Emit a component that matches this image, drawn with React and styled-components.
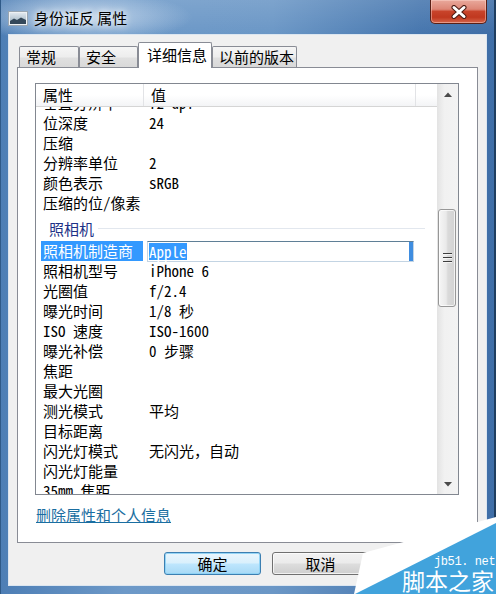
import React from "react";
import styled, { createGlobalStyle } from "styled-components";

const GlobalStyle = createGlobalStyle`
  html, body {
    margin: 0;
    padding: 0;
    background: #4f80b6;
  }
  body {
    width: 496px;
    height: 594px;
    overflow: hidden;
    font-family: "Noto Sans CJK SC", "Liberation Sans", sans-serif;
  }
  * {
    box-sizing: border-box;
  }
`;

const rows = [
  ["垂直分辨率", "72 dpi"],
  ["位深度", "24"],
  ["压缩", ""],
  ["分辨率单位", "2"],
  ["颜色表示", "sRGB"],
  ["压缩的位/像素", ""],
  { group: "照相机" },
  ["照相机制造商", "Apple", true],
  ["照相机型号", "iPhone 6"],
  ["光圈值", "f/2.4"],
  ["曝光时间", "1/8 秒"],
  ["ISO 速度", "ISO-1600"],
  ["曝光补偿", "0 步骤"],
  ["焦距", ""],
  ["最大光圈", ""],
  ["测光模式", "平均"],
  ["目标距离", ""],
  ["闪光灯模式", "无闪光，自动"],
  ["闪光灯能量", ""],
  ["35mm 焦距", ""],
  ["镜头制造商", ""],
  ["镜头型号", ""],
];

const tabs = [
  { label: "常规", w: 60 },
  { label: "安全", w: 59 },
  { label: "详细信息", w: 74, active: true },
  { label: "以前的版本", w: 85 },
];

const Window = styled.div`
  position: relative;
  width: 496px;
  height: 594px;
  display: flex;
  flex-direction: column;
  overflow: hidden;
  background:
    radial-gradient(ellipse 150px 34px at 80px 17px, rgba(214, 228, 243, 0.85), rgba(214, 228, 243, 0) 75%),
    linear-gradient(to bottom, rgba(255, 255, 255, 0.12), rgba(255, 255, 255, 0) 34px),
    linear-gradient(to right, #4d7eb5 0%, #6d99c8 25%, #6b97c6 55%, #4676ae 85%, #3f6ea7 100%);
  box-shadow: inset -2px 0 0 #1f3e60, inset 1px 0 0 #2f5a88;
`;

const TitleBar = styled.div`
  height: 34px;
  flex: none;
  display: flex;
  align-items: flex-start;
  padding-left: 8px;
`;

const TitleIcon = styled.svg`
  margin-top: 11px;
  flex: none;
`;

const TitleText = styled.div`
  margin: 8px 0 0 6px;
  font-size: 15px;
  line-height: 20px;
  color: #000;
  text-shadow: 0 0 6px rgba(255, 255, 255, 0.9), 0 0 10px rgba(255, 255, 255, 0.7);
`;

const CloseButton = styled.div`
  margin-left: auto;
  margin-right: 9px;
  width: 57px;
  height: 24px;
  display: flex;
  align-items: center;
  justify-content: center;
  border: 1px solid #5a2016;
  border-top: none;
  border-radius: 0 0 5px 5px;
  background: linear-gradient(to bottom, #e9a99c 0%, #dd8676 40%, #c8432a 50%, #c0381f 75%, #d7664b 100%);
  box-shadow: inset 0 0 0 1px rgba(255, 220, 210, 0.45);
`;

const Client = styled.div`
  flex: 1;
  margin: 0 9px 8px 8px;
  border: 1px solid #dce6f0;
  background: #f0f0f0;
  display: flex;
  flex-direction: column;
  padding: 7px 8px 10px 8px;
`;

const TabRow = styled.div`
  display: flex;
  align-items: flex-end;
  height: 26px;
  margin-bottom: -1px;
  padding-left: 2px;
  flex: none;
`;

const Tab = styled.div`
  width: ${(p) => p.$w}px;
  height: ${(p) => (p.$active ? 26 : 22)}px;
  padding-left: ${(p) => (p.$active ? 8 : 6)}px;
  border: 1px solid #898c95;
  border-bottom: none;
  border-radius: 2px 2px 0 0;
  font-size: 15px;
  line-height: ${(p) => (p.$active ? 24 : 20)}px;
  white-space: nowrap;
  color: #000;
  background: ${(p) =>
    p.$active
      ? "#fff"
      : "linear-gradient(to bottom, #f5f5f5 0%, #ededed 48%, #e0e0e0 52%, #d8d8d8 100%)"};
  position: ${(p) => (p.$active ? "relative" : "static")};
  z-index: ${(p) => (p.$active ? 1 : "auto")};
`;

const Panel = styled.div`
  height: 476px;
  flex: none;
  border: 1px solid #898c95;
  background: #fff;
  padding: 15px 0 0 17px;
`;

const List = styled.div`
  width: 424px;
  height: 412px;
  border: 1px solid #828790;
  display: flex;
  font-family: "Noto Sans Mono CJK SC", "Liberation Mono", "Noto Sans CJK SC", monospace;
  font-size: 15px;
  color: #000;
`;

const ListMain = styled.div`
  width: 401px;
  display: flex;
  flex-direction: column;
`;

const Header = styled.div`
  height: 23px;
  flex: none;
  display: flex;
  border-bottom: 1px solid #d5d5d5;
  background: linear-gradient(to bottom, #fff 0%, #fff 50%, #f3f4f6 100%);
`;

const HeaderCell = styled.div`
  width: ${(p) => p.$w}px;
  padding-left: 7px;
  line-height: 22px;
  border-right: 1px solid ${(p) => (p.$last ? "transparent" : "#e2e3e6")};
`;

const Body = styled.div`
  flex: 1;
  overflow: hidden;
`;

const Rows = styled.div`
  margin-top: -14px;
`;

const Row = styled.div`
  display: flex;
  height: 20px;
  line-height: 20px;
  padding-left: 5px;
  white-space: nowrap;
`;

const Label = styled.div`
  width: 102px;
  flex: none;
  padding-left: 2px;
  background: ${(p) => (p.$selected ? "#3399ff" : "transparent")};
  color: ${(p) => (p.$selected ? "#fff" : "#000")};
`;

const Value = styled.div`
  margin-left: 4px;
  padding-left: 2px;
`;

const EditBox = styled.div`
  margin-left: 4px;
  width: 267px;
  height: 21px;
  display: flex;
  align-items: center;
  border: 1px solid #c3d4e3;
  border-top-color: #5f7f96;
  padding-left: 1px;
  background: #fff;

  &::after {
    content: "";
    margin-left: auto;
    width: 4px;
    height: 19px;
    background: #3f8de0;
  }
`;

const Selection = styled.span`
  background: #3399ff;
  color: #fff;
  line-height: 17px;
`;

const Group = styled.div`
  display: flex;
  align-items: center;
  height: 28px;
  padding: 3px 12px 0 13px;
  color: #1e3287;
`;

const GroupLine = styled.div`
  flex: 1;
  height: 1px;
  margin-left: 4px;
  background: #e2e7ee;
`;

const ScrollBar = styled.div`
  width: 21px;
  display: flex;
  flex-direction: column;
  background: linear-gradient(to right, #e3e3e3 0%, #f1f1f1 35%, #f3f3f3 100%);
`;

const ArrowButton = styled.div`
  height: 20px;
  flex: none;
  display: flex;
  align-items: center;
  justify-content: center;
`;

const Track = styled.div`
  flex: 1;
`;

const Thumb = styled.div`
  margin: ${(p) => p.$offset}px 2px 0 1px;
  height: 98px;
  border: 1px solid #979797;
  border-radius: 3px;
  background: linear-gradient(to right, #f6f6f6 0%, #e9e9e9 45%, #dadada 55%, #d2d2d2 100%);
  box-shadow: inset 0 0 0 1px rgba(255, 255, 255, 0.7);
  display: flex;
  align-items: center;
  justify-content: center;
`;

const Grip = styled.div`
  width: 9px;
  height: 10px;
  background: repeating-linear-gradient(to bottom, #3d3d3d 0 1px, #f4f4f4 1px 2px, transparent 2px 4px);
`;

const DeleteLink = styled.a`
  display: block;
  width: max-content;
  margin: 10px 0 0 1px;
  font-size: 15px;
  line-height: 20px;
  color: #1a6ea1;
  text-decoration: underline;
  cursor: pointer;
`;

const ButtonRow = styled.div`
  display: flex;
  justify-content: flex-end;
  gap: 11px;
  margin-top: 9px;
  padding-right: 1px;
`;

const Button = styled.div`
  width: 97px;
  height: 23px;
  border-radius: 3px;
  font-size: 15px;
  line-height: 21px;
  text-align: center;
  border: 1px solid ${(p) => (p.$default ? "#3c7fb1" : "#707070")};
  color: ${(p) => (p.$disabled ? "#8d8d8d" : "#000")};
  background: ${(p) =>
    p.$default
      ? "linear-gradient(to bottom, #eaf6fd 0%, #d9f0fc 48%, #bee6fd 52%, #a7d9f5 100%)"
      : "linear-gradient(to bottom, #f2f2f2 0%, #ebebeb 48%, #dddddd 52%, #cfcfcf 100%)"};
  box-shadow: inset 0 0 0 1px ${(p) => (p.$default ? "rgba(140, 210, 245, 0.9)" : "rgba(255, 255, 255, 0.7)")};
`;

const Watermark = styled.div`
  position: absolute;
  right: 0;
  bottom: 0;
  width: 145px;
  height: 80px;
  color: #fff;
`;

const WatermarkShape = styled.svg`
  position: absolute;
  left: 0;
  top: 0;
`;

const SiteName = styled.span`
  position: absolute;
  left: 83px;
  top: 41px;
  white-space: nowrap;
  font-family: "Liberation Mono", monospace;
  font-size: 12px;
  line-height: 14px;
  letter-spacing: -0.4px;
`;

const SiteTitle = styled.span`
  position: absolute;
  left: 51px;
  top: 52px;
  white-space: nowrap;
  font-family: "Noto Sans CJK SC", sans-serif;
  font-size: 23px;
  line-height: 28px;
`;

function Arrow({ down }) {
  return (
    <svg width="8" height="5" viewBox="0 0 8 5">
      <path d={down ? "M0 0 H8 L4 4.5 Z" : "M0 5 H8 L4 0.5 Z"} fill="#4a4a4a" />
    </svg>
  );
}

export default function App() {
  return (
    <>
      <GlobalStyle />
      <Window>
        <TitleBar>
          <TitleIcon width="20" height="15" viewBox="0 0 20 15">
            <defs>
              <linearGradient id="sky" x1="0" y1="0" x2="0" y2="1">
                <stop offset="0" stopColor="#dfe7ee" />
                <stop offset="1" stopColor="#98aebd" />
              </linearGradient>
            </defs>
            <rect x="0.5" y="0.5" width="19" height="14" fill="#eef1f4" stroke="#9aa6b1" />
            <rect x="2" y="2" width="16" height="11" fill="url(#sky)" />
            <path d="M2 10 L6 7.5 L9 9 L13 6.5 L18 9 V13 H2 Z" fill="#34485a" />
          </TitleIcon>
          <TitleText>身份证反 属性</TitleText>
          <CloseButton>
            <svg width="18" height="14" viewBox="0 0 18 14">
              <path d="M4 2.5 L14 11.5 M14 2.5 L4 11.5" stroke="#4a1a12" strokeWidth="5" strokeLinecap="round" />
              <path d="M4 2.5 L14 11.5 M14 2.5 L4 11.5" stroke="#fff" strokeWidth="3" strokeLinecap="round" />
            </svg>
          </CloseButton>
        </TitleBar>

        <Client>
          <TabRow>
            {tabs.map((t) => (
              <Tab key={t.label} $w={t.w} $active={t.active}>
                {t.label}
              </Tab>
            ))}
          </TabRow>

          <Panel>
            <List>
              <ListMain>
                <Header>
                  <HeaderCell $w={108}>属性</HeaderCell>
                  <HeaderCell $w={272}>值</HeaderCell>
                  <HeaderCell $w={21} $last />
                </Header>
                <Body>
                  <Rows>
                    {rows.map((r, i) =>
                      r.group ? (
                        <Group key={i}>
                          {r.group}
                          <GroupLine />
                        </Group>
                      ) : (
                        <Row key={i}>
                          <Label $selected={r[2]}>{r[0]}</Label>
                          {r[2] ? (
                            <EditBox>
                              <Selection>{r[1]}</Selection>
                            </EditBox>
                          ) : (
                            <Value>{r[1]}</Value>
                          )}
                        </Row>
                      )
                    )}
                  </Rows>
                </Body>
              </ListMain>
              <ScrollBar>
                <ArrowButton>
                  <Arrow />
                </ArrowButton>
                <Track>
                  <Thumb $offset={105}>
                    <Grip />
                  </Thumb>
                </Track>
                <ArrowButton>
                  <Arrow down />
                </ArrowButton>
              </ScrollBar>
            </List>
            <DeleteLink>删除属性和个人信息</DeleteLink>
          </Panel>

          <ButtonRow>
            <Button $default>确定</Button>
            <Button>取消</Button>
            <Button $disabled>应用(A)</Button>
          </ButtonRow>
        </Client>

        <Watermark>
          <WatermarkShape width="145" height="80" viewBox="0 0 145 80">
            <polygon points="3,80 12,39 145,3 145,80" fill="#ffffff" />
            <polygon points="4,80 145,9 145,80" fill="#41a3dc" />
          </WatermarkShape>
          <SiteName>jb51. net</SiteName>
          <SiteTitle>脚本之家</SiteTitle>
        </Watermark>
      </Window>
    </>
  );
}
